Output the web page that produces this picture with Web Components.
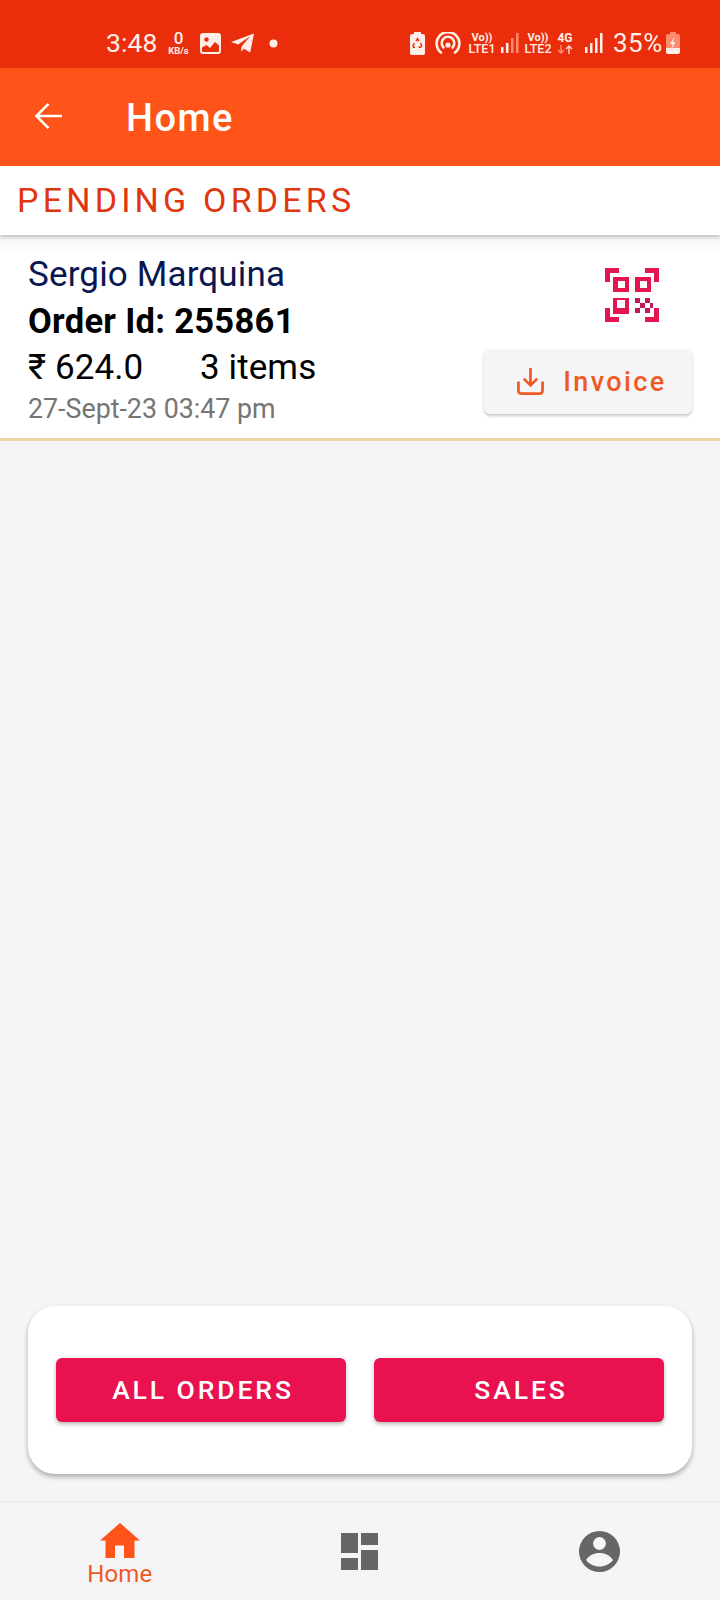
<!DOCTYPE html>
<html>
<head>
<meta charset="utf-8">
<style>
  html, body { margin: 0; padding: 0; }
  body { width: 720px; height: 1600px; overflow: hidden; background: #f5f5f8; font-family: Roboto, "Liberation Sans", sans-serif; }
  app-page { height: 1600px; }
</style>
</head>
<body>
<app-page>
  <status-bar></status-bar>
  <app-bar title="Home"></app-bar>
  <section-title>PENDING ORDERS</section-title>
  <order-card name="Sergio Marquina" order-id="255861" amount="₹ 624.0" items="3 items" date="27-Sept-23 03:47 pm"></order-card>
  <action-panel>
    <raised-button>ALL ORDERS</raised-button>
    <raised-button>SALES</raised-button>
  </action-panel>
  <bottom-nav></bottom-nav>
</app-page>

<script>
class appPage extends HTMLElement {
  constructor() {
    super();
    this.attachShadow({ mode: 'open' }).innerHTML = `<style>
      :host { display: flex; flex-direction: column; width: 720px; background: #f5f5f8; }
      ::slotted(action-panel) { margin-top: auto; }
    </style><slot></slot>`;
  }
}

class statusBar extends HTMLElement {
  constructor() {
    super();
    this.attachShadow({ mode: 'open' }).innerHTML = `<style>
      :host { display: flex; align-items: center; height: 68px; box-sizing: border-box; padding: 18px 40px 0 106px; background: #ea2e0b; color: #ffeee8; font-family: Roboto, sans-serif; }
      svg { display: block; flex: none; }
      .time { font-size: 26.500px; width: 50px; letter-spacing: .1px; line-height: 30px; }
      .speed { width: 27px; margin-left: 9px; text-align: center; font-weight: 700; line-height: 1; }
      .speed b { display: block; font-size: 17px; line-height: 15px; font-weight: 500; }
      .speed i { display: block; font-style: normal; font-size: 9.500px; line-height: 10px; white-space: nowrap; }
      .lte { width: 28px; text-align: center; font-weight: 500; }
      .lte b { display: block; font-size: 11px; line-height: 11px; font-weight: 700; }
      .lte i { display: block; font-style: normal; font-size: 12.500px; line-height: 12px; white-space: nowrap; }
      .pct { font-size: 26px; line-height: 30px; letter-spacing: .5px; margin-left: 10px; width: 53px; white-space: nowrap; }
      .right { margin-left: auto; display: flex; align-items: center; }
    </style>
    <span class="time">3:48</span>
    <span class="speed"><b>0</b><i>KB/s</i></span>
    <svg style="margin-left:8px" width="21" height="21" viewBox="0 0 21 21"><path fill="#ffeee8" fill-rule="evenodd" d="M3 0h15a3 3 0 0 1 3 3v15a3 3 0 0 1-3 3H3a3 3 0 0 1-3-3V3a3 3 0 0 1 3-3zM2 14.500V18a1 1 0 0 0 1 1h15a1 1 0 0 0 1-1v-5.500l-4-3.500-5 6-3.500-3z"/><circle cx="6.500" cy="6.500" r="2.200" fill="#ea2e0b"/></svg>
    <svg style="margin-left:10px" width="23" height="21" viewBox="0 0 24 21"><path fill="#ffeee8" d="M24 0l-4 20-6.500-4-3 3 .5-5.500L20 3 7.500 11.500 0 9z"/></svg>
    <svg style="margin-left:15px" width="9" height="9" viewBox="0 0 9 9"><circle cx="4.500" cy="4.500" r="4" fill="#ffeee8"/></svg>
    <div class="right">
      <svg width="15" height="23" viewBox="0 0 15 23"><path fill="#ffeee8" d="M4 0h7v2h2a2 2 0 0 1 2 2v17a2 2 0 0 1-2 2H2a2 2 0 0 1-2-2V4a2 2 0 0 1 2-2h2z"/><path fill="none" stroke="#ea2e0b" stroke-width="1.400" d="M6 9l1.500-2.200L9 9M10.500 11l1.300 2.600-1.300 1.600H8.500M5 15.200H3.600l-.6-1.600L4.500 11"/></svg>
      <svg style="margin-left:10px" width="26" height="22" viewBox="0 0 26 22"><g fill="none" stroke="#ffeee8" stroke-width="2.600" stroke-linecap="round"><path d="M6 20.500a11.400 11.400 0 1 1 14 0"/><path d="M8.500 15.500a6.300 6.300 0 1 1 9 0"/></g><circle cx="13" cy="13" r="2.600" fill="#ffeee8"/></svg>
      <span class="lte" style="margin-left:7px"><b>Vo))</b><i>LTE1</i></span>
      <svg style="margin-left:5px" width="18" height="20" viewBox="0 0 18 20"><g fill="#ffeee8"><rect x="0" y="14" width="2.500" height="6"/><rect x="5" y="10" width="2.500" height="10"/></g><g fill="#ff8a6e"><rect x="10" y="5" width="2.500" height="15"/><rect x="15" y="0" width="2.500" height="20"/></g></svg>
      <span class="lte" style="margin-left:5px"><b>Vo))</b><i>LTE2</i></span>
      <span class="lte" style="margin-left:2px;width:22px"><b style="font-size:12px">4G</b><svg style="margin:1px auto 0" width="16" height="9" viewBox="0 0 16 9"><path fill="none" stroke="#ff8a6e" stroke-width="1.500" d="M4 0v8M1 5l3 3 3-3"/><path fill="none" stroke="#ffd1c4" stroke-width="1.500" d="M12 9V1M9 4l3-3 3 3"/></svg></span>
      <svg style="margin-left:9px" width="18" height="20" viewBox="0 0 18 20"><g fill="#ffeee8"><rect x="0" y="14" width="2.500" height="6"/><rect x="5" y="10" width="2.500" height="10"/><rect x="10" y="5" width="2.500" height="15"/><rect x="15" y="0" width="2.500" height="20"/></g></svg>
      <span class="pct">35%</span>
      <svg style="margin-left:0" width="14" height="22" viewBox="0 0 14 22"><path fill="#ff8a6e" d="M4 0h6v2h2a2 2 0 0 1 2 2v12H0V4a2 2 0 0 1 2-2h2z"/><path fill="#ffeee8" d="M0 16h14v4a2 2 0 0 1-2 2H2a2 2 0 0 1-2-2z"/><path fill="#ffeee8" d="M8 5L4 12h2.500L5.500 17l4-7H7z"/></svg>
    </div>`;
  }
}

class appBar extends HTMLElement {
  constructor() {
    super();
    this.attachShadow({ mode: 'open' }).innerHTML = `<style>
      :host { display: flex; align-items: center; height: 98px; background: #ff5419; color: #fff; box-sizing: border-box; padding-left: 34px; }
      svg { display: block; margin-top: -3px; }
      h1 { margin: 2px 0 0 64px; font: 500 38px/40px Roboto, sans-serif; letter-spacing: 1.500px; }
    </style>
    <svg width="28" height="28" viewBox="0 0 29 28"><path fill="none" stroke="#fff" stroke-width="2.600" d="M29 14H3M15 1.500L2.500 14 15 26.500"/></svg>
    <h1>${this.getAttribute('title')}</h1>`;
  }
}

class sectionTitle extends HTMLElement {
  constructor() {
    super();
    this.attachShadow({ mode: 'open' }).innerHTML = `<style>
      :host { display: block; height: 69px; box-sizing: border-box; padding: 15px 0 0 17px; background: #fff; box-shadow: 0 2px 4px rgba(0,0,0,.22); position: relative; color: #e0360f; font: 400 34px/38px Roboto, sans-serif; letter-spacing: 4.200px; }
    </style><slot></slot>`;
  }
}

class orderCard extends HTMLElement {
  constructor() {
    super();
    const a = n => this.getAttribute(n);
    this.attachShadow({ mode: 'open' }).innerHTML = `<style>
      :host { display: flex; justify-content: space-between; height: 206px; box-sizing: border-box; padding: 21px 28px 0; background: linear-gradient(#f3f3f3, #fff 18px); border-bottom: 3px solid #f0d5a4; font-family: Roboto, sans-serif; }
      .info div { white-space: nowrap; }
      .name { font-size: 35px; line-height: 38px; color: #0a1650; letter-spacing: .15px; }
      .id { font-size: 34.500px; line-height: 44px; margin-top: 5px; font-weight: 700; color: #000; letter-spacing: .3px; }
      .meta { display: flex; font-size: 35px; line-height: 44px; color: #000; margin-top: 3px; letter-spacing: .1px; }
      .meta span:first-child { width: 172px; }
      .date { font-size: 26.800px; line-height: 32px; color: #757575; margin-top: 3px; }
      .side { display: flex; flex-direction: column; align-items: flex-end; margin-top: -2px; }
      .qr { margin: 14px 33px 0 0; display: block; }
      button { all: unset; margin-top: 27px; width: 208px; height: 65px; display: flex; align-items: center; justify-content: center; box-sizing: border-box; padding-left: 8px; background: #f5f5f7; border-radius: 6px; box-shadow: 0 2px 3px rgba(0,0,0,.22); color: #ef5a24; font: 500 27px/32px Roboto, sans-serif; letter-spacing: 2.400px; }
      button svg { margin-right: 19px; display: block; }
    </style>
    <div class="info">
      <div class="name">${a('name')}</div>
      <div class="id">Order Id: ${a('order-id')}</div>
      <div class="meta"><span>${a('amount')}</span><span>${a('items')}</span></div>
      <div class="date">${a('date')}</div>
    </div>
    <div class="side">
      <svg class="qr" width="54" height="54" viewBox="0 0 54 54"><g fill="#e4144f"><path d="M0 0h14v5H5v9H0zM40 0h14v14h-5V5h-9zM0 40h5v9h9v5H0zM49 40h5v14H40v-5h9z"/></g><path fill="#e4144f" fill-rule="evenodd" d="M8 9h16v15H8zM13 13v7h7v-7zM30 9h16v15H30zM35 13v7h7v-7zM8 30h16v16H8zM12 32v8h8v-8z"/><g fill="#c2185b"><path d="M30 30h5v5h-5zM40 30h5v5h-5zM35 35h5v5h-5zM45 35h3v5h-3zM30 40h5v5h-5zM40 40h5v5h-5z"/></g></svg>
      <button><svg width="27" height="27" viewBox="0 0 28 28"><path fill="none" stroke="#ef5a24" stroke-width="2.800" d="M14 0v17M7 11l7 7 7-7" /><path fill="none" stroke="#ef5a24" stroke-width="2.800" stroke-linejoin="round" d="M1.500 14v9.500a3 3 0 0 0 3 3h19a3 3 0 0 0 3-3V14"/></svg><span>Invoice</span></button>
    </div>`;
  }
}

class actionPanel extends HTMLElement {
  constructor() {
    super();
    this.attachShadow({ mode: 'open' }).innerHTML = `<style>
      :host { display: grid; grid-template-columns: 1fr 1fr; gap: 28px; width: 664px; height: 168px; box-sizing: border-box; margin: 0 28px 27px; padding: 52px 28px; background: #fff; border-radius: 27px; box-shadow: 0 3px 5px rgba(0,0,0,.3); }
    </style><slot></slot>`;
  }
}

class raisedButton extends HTMLElement {
  constructor() {
    super();
    this.attachShadow({ mode: 'open' }).innerHTML = `<style>
      :host { display: flex; align-items: center; justify-content: center; height: 64px; box-sizing: border-box; padding-left: 4px; background: #e91150; color: #fff; border-radius: 6px; box-shadow: 0 2px 4px rgba(0,0,0,.3); font: 500 26.500px/30px Roboto, sans-serif; letter-spacing: 2.900px; }
    </style><slot></slot>`;
  }
}

class navItem extends HTMLElement {
  constructor() {
    super();
    this.attachShadow({ mode: 'open' }).innerHTML = `<style>
      :host { display: flex; flex-direction: column; align-items: center; flex: 1; box-sizing: border-box; font: 400 24px/28px Roboto, sans-serif; color: #ef5a24; }
      :host([active]) { padding-top: 20px; }
      :host(:not([active])) { padding-top: 29px; }
      ::slotted(svg) { display: block; }
    </style><slot></slot>`;
  }
}

class bottomNav extends HTMLElement {
  constructor() {
    super();
    this.attachShadow({ mode: 'open' }).innerHTML = `<style>
      :host { display: flex; height: 99px; box-sizing: border-box; padding-right: 1px; border-top: 2px solid #eeeef1; background: #f5f5f8; }
      span { display: block; margin-top: 2px; letter-spacing: .2px; }
    </style>
    <nav-item active>
      <svg width="40" height="35" viewBox="0 0 40 35"><path fill="#ff5419" d="M20 0L40 17.500H34.500V35H24V22.500H15V35H5.500V17.500H0z"/></svg>
      <span>Home</span>
    </nav-item>
    <nav-item>
      <svg width="37" height="37" viewBox="0 0 37 37" style="margin-top:1px"><path fill="#666" d="M0 0h17v20H0zM20 0h17v12H20zM0 25h17v12H0zM20 17h17v20H20z"/></svg>
    </nav-item>
    <nav-item>
      <svg width="41" height="41" viewBox="0 0 41 41" style="margin-top:-1px"><circle cx="20.500" cy="20.500" r="20.500" fill="#666"/><circle cx="20.500" cy="12.500" r="6.400" fill="#f5f5f8"/><path fill="#f5f5f8" d="M7 29c3-4.500 8-7 13.500-7s10.500 2.500 13.500 7c-3 4-8 6.500-13.500 6.500S10 33 7 29z"/></svg>
    </nav-item>`;
  }
}

window.customElements.define('app-page', appPage);
window.customElements.define('status-bar', statusBar);
window.customElements.define('app-bar', appBar);
window.customElements.define('section-title', sectionTitle);
window.customElements.define('order-card', orderCard);
window.customElements.define('action-panel', actionPanel);
window.customElements.define('raised-button', raisedButton);
window.customElements.define('nav-item', navItem);
window.customElements.define('bottom-nav', bottomNav);
</script>
</body>
</html>
